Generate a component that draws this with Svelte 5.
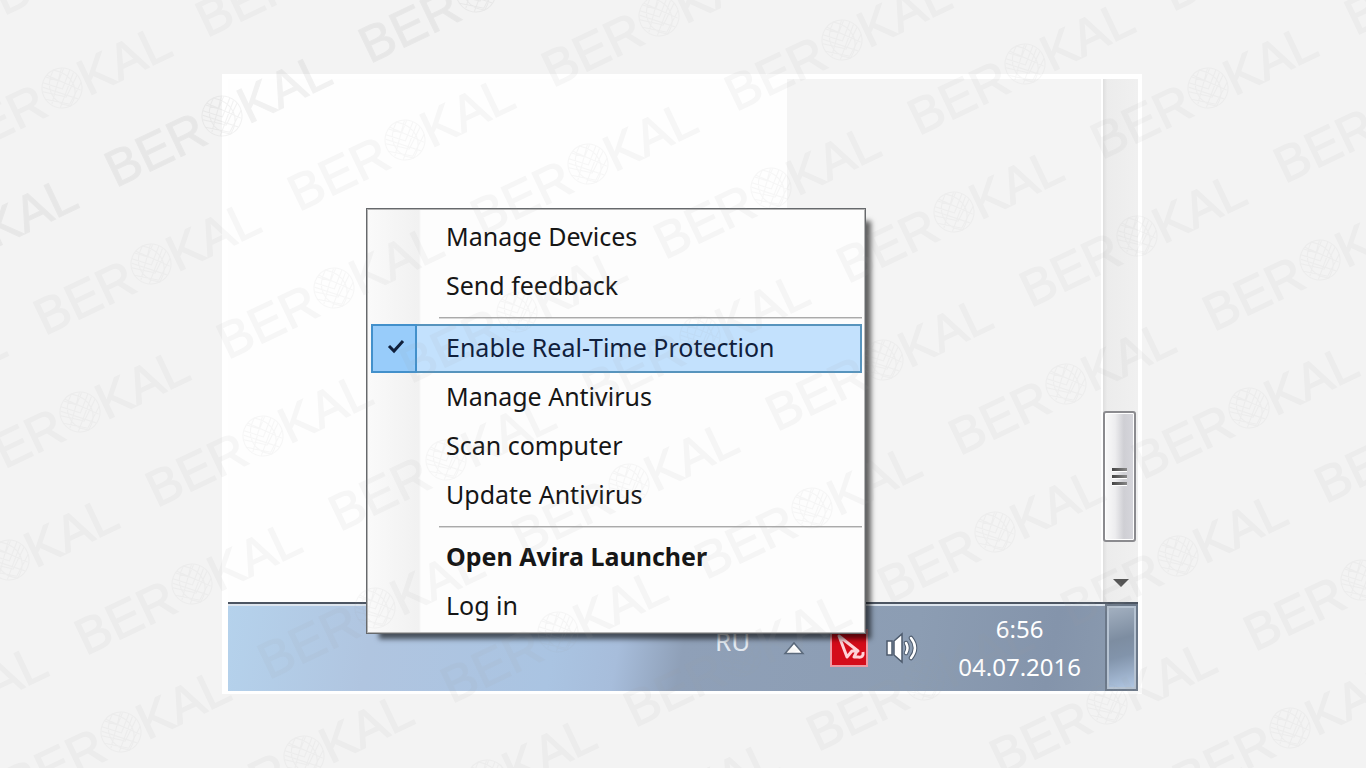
<script>
  const groups = [
    [{ label: 'Manage Devices' }, { label: 'Send feedback' }],
    [
      { label: 'Enable Real-Time Protection', checked: true },
      { label: 'Manage Antivirus' },
      { label: 'Scan computer' },
      { label: 'Update Antivirus' }
    ],
    [{ label: 'Open Avira Launcher', strong: true }, { label: 'Log in' }]
  ];

  const marks = [{ x: 62, y: 88, dark: false }, { x: 313, y: -34, dark: false }];
  for (let row = -4; row <= 6; row++) {
    for (let col = -6; col <= 9; col++) {
      const x = 405 + col * 183 - row * 71;
      const y = 140 + col * 24 + row * 148;
      if (x < -110 || x > 1480 || y < -60 || y > 825) continue;
      if (col + row === -2 && row < 1) continue;
      const dark =
        (col === -1 && row === 0) || (col === 0 && row === -1) || (col === -2 && row === 1);
      marks.push({ x, y, dark });
    }
  }
</script>

<div class="page">
  <main class="frame">
    <section class="desktop">
      <div class="window">
        <div class="blank"></div>
        <div class="panel"></div>
        <div class="scrollbar">
          <div class="thumb"><i></i><i></i><i></i></div>
          <button class="down" aria-label="Scroll down">
            <svg width="18" height="10" viewBox="0 0 18 10"><path d="M1 1H17L9 9Z" fill="#555" /></svg>
          </button>
        </div>
      </div>

      <footer class="taskbar">
        <div class="tray">
          <span class="lang">RU</span>
          <button class="icon" aria-label="Show hidden icons">
            <svg width="22" height="14" viewBox="0 0 22 14"><path d="M2 12.500L11 2L20 12.500Z" fill="#fff" stroke="#5b6a7c" stroke-width="1.500" /></svg>
          </button>
          <button class="icon avira" aria-label="Avira">
            <svg width="38" height="38" viewBox="0 0 38 38">
              <rect x="1" y="1" width="36" height="36" fill="#d40c1a" stroke="#ee9aa4" stroke-width="2" />
              <path d="M9 7L17 28L22 22L28 22ZM27 22L24 28H28Q34 29 33 23" fill="none" stroke="#ffd3d8" stroke-width="3" stroke-linejoin="round" />
            </svg>
          </button>
          <button class="icon" aria-label="Volume">
            <svg width="34" height="34" viewBox="0 0 34 34">
              <path d="M2 10H7V24H2ZM9 10L17 3V31L9 24Z" fill="#fff" stroke="#4d5b6d" stroke-width="1.500" />
              <g fill="none" stroke-linecap="round">
                <g stroke="#4d5b6d" stroke-width="4.500"><path d="M21 12Q24 17 21 22" /><path d="M26 7Q34 17 26 27" /></g>
                <g stroke="#fff" stroke-width="2.500"><path d="M21 12Q24 17 21 22" /><path d="M26 7Q34 17 26 27" /></g>
              </g>
            </svg>
          </button>
        </div>
        <time class="clock" datetime="2016-07-04T06:56"><span>6:56</span><span>04.07.2016</span></time>
        <button class="peek" aria-label="Show desktop"></button>
      </footer>

      <div class="menu" role="menu">
        {#each groups as group, g}
          {#if g > 0}<hr />{/if}
          {#each group as item}
            <button
              class="item"
              class:checked={item.checked}
              class:strong={item.strong}
              role={item.checked ? 'menuitemcheckbox' : 'menuitem'}
              aria-checked={item.checked ? 'true' : undefined}
            >
              <span class="mark">
                {#if item.checked}
                  <svg width="18" height="16" viewBox="0 0 18 16"><path d="M2 7L7 12L16 2" fill="none" stroke="#10203c" stroke-width="3" /></svg>
                {/if}
              </span>
              <span class="label">{item.label}</span>
            </button>
          {/each}
        {/each}
      </div>
    </section>
  </main>

  <svg class="watermark" aria-hidden="true">
    <defs>
      <g id="emblem" fill="none" stroke="#a0a0a0" stroke-width="1">
        <circle r="20" />
        <path d="M0 -20C-16 -8 -16 10 0 20C16 10 16 -8 0 -20ZM-19 -5L0 10L19 -5M-20 3L0 18L20 3M-15 -13L0 1L15 -13M-10 -17L0 -8L10 -17M-8 -18L16 10M8 -18L-16 10M-17 -9L10 17M17 -9L-10 17" />
      </g>
    </defs>
    {#each marks as m}
      <g transform="translate({m.x} {m.y}) rotate(-25.600)" opacity={m.dark ? 0.13 : 0.08}>
        <text x="-22" y="19" text-anchor="end">BER</text>
        <use href="#emblem" />
        <text x="20" y="19">KAL</text>
      </g>
    {/each}
  </svg>
</div>

<style>
  :global(body) {
    margin: 0;
    background: #f3f3f3;
  }
  .page {
    position: relative;
    display: flex;
    min-height: 100vh;
    box-sizing: border-box;
    padding: 74px 224px 74px 222px;
    overflow: hidden;
    font-family: 'Noto Sans', 'Open Sans', sans-serif;
  }
  .frame {
    flex: 1;
    display: flex;
    padding: 5px 4px 3px 6px;
    background: #fff;
  }
  .desktop {
    position: relative;
    flex: 1;
    display: flex;
    flex-direction: column;
  }
  .window {
    flex: 1;
    display: flex;
    min-height: 300px;
  }
  .blank {
    flex: 559;
    background: #fefefe;
  }
  .panel {
    flex: 314;
    background: #f4f4f4;
    border-right: 2px solid #fff;
  }
  .scrollbar {
    width: 35px;
    display: flex;
    flex-direction: column;
    align-items: center;
    justify-content: flex-end;
    background: linear-gradient(90deg, #dedede, #ececec 12%, #f0f0f0);
  }
  .thumb {
    align-self: flex-start;
    width: 33px;
    height: 131px;
    box-sizing: border-box;
    border: 2px solid #8b8b8f;
    border-radius: 3px;
    box-shadow: inset 0 0 0 1px #fff;
    background: linear-gradient(90deg, #fafafa, #ededef 35%, #cfcfd4 65%, #d6d6dc);
    display: flex;
    flex-direction: column;
    align-items: center;
    justify-content: center;
    gap: 3px;
  }
  .thumb i {
    width: 15px;
    height: 4px;
    background: linear-gradient(90deg, #444, #888);
    border-bottom: 1px solid #fff;
    box-sizing: border-box;
  }
  button {
    margin: 0;
    padding: 0;
    border: 0;
    background: none;
    font: inherit;
    color: inherit;
    text-align: left;
  }
  svg {
    display: block;
  }
  .down {
    margin: 36px 0 14px;
  }
  .taskbar {
    display: flex;
    align-items: center;
    height: 87px;
    border-top: 2px solid #4c5562;
    box-shadow: inset 0 2px #dde5ee;
    background: linear-gradient(100deg, #b5d2ec, #b0c5e0 16%, #aac4e2 36%, #a7bddb 43%, #8fa0b8 50%, #8c9db3 75%, #8494ab 90%, #8c9cb0);
    color: #fff;
  }
  .tray {
    flex: 1;
    display: flex;
    align-items: center;
    justify-content: flex-end;
    gap: 17px;
  }
  .lang {
    margin: 0 16px 14px 0;
    font-size: 26px;
    color: #e4ebf3;
  }
  .avira {
    margin-left: 8px;
  }
  .clock {
    display: flex;
    flex-direction: column;
    align-items: center;
    margin: 0 24px 0 39px;
    font-size: 24px;
    line-height: 38px;
  }
  .peek {
    align-self: stretch;
    width: 33px;
    border: 2px solid #6b7889;
    box-shadow: inset 0 0 0 2px #b6c3d2;
    background: linear-gradient(165deg, #a5b2c2, #7d8da1 40%, #8294ab 60%, #b3c9e5);
  }
  .menu {
    position: absolute;
    top: 129px;
    left: 138px;
    width: 500px;
    box-sizing: border-box;
    padding: 4px 3px 2px 4px;
    border: 1px solid #66696c;
    outline: 1px solid #b5b5b5;
    outline-offset: -2px;
    background: linear-gradient(90deg, #fafafa, #f1f1f1 52px, #fdfdfd 54px);
    box-shadow: 9px 9px 5px -4px rgba(0, 0, 0, 0.6);
    color: #161616;
    font-size: 25px;
  }
  .item {
    display: flex;
    align-items: center;
    width: 100%;
    height: 49px;
    box-sizing: border-box;
  }
  .label {
    padding-bottom: 4px;
  }
  .mark {
    align-self: stretch;
    display: flex;
    align-items: center;
    justify-content: center;
    width: 46px;
    margin-right: 29px;
    padding: 0 0 3px 3px;
    box-sizing: border-box;
  }
  .checked {
    background: #c3e1fd;
    box-shadow: inset 0 0 0 2px #5794bd;
    color: #10203c;
  }
  .checked .mark {
    background: #98ccfa;
    border: 2px solid #4290cb;
  }
  .strong {
    font-weight: 700;
  }
  hr {
    height: 1px;
    margin: 6px 0 5px 68px;
    border: 0;
    border-top: 1px solid #aaa;
    background: #d8d8d8;
  }
  .watermark {
    position: absolute;
    inset: 0;
    width: 100%;
    height: 100%;
    pointer-events: none;
  }
  .watermark text {
    font-family: 'Liberation Sans', Arial, sans-serif;
    font-size: 51px;
    fill: #a0a0a0;
    stroke: #a0a0a0;
    stroke-width: 1px;
  }
</style>
